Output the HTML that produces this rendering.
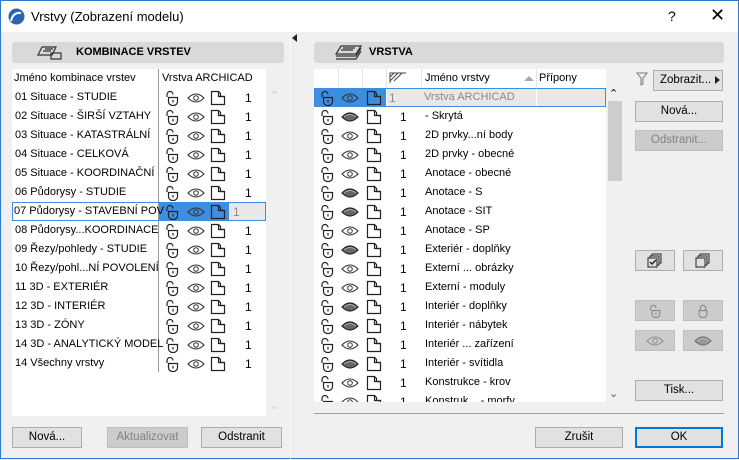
<!DOCTYPE html>
<html><head><meta charset="utf-8"><style>
*{margin:0;padding:0;box-sizing:border-box}
body{width:739px;height:459px;overflow:hidden;font-family:"Liberation Sans","DejaVu Sans",sans-serif;font-size:11px;color:#000;background:#f0f0f0}
.win{position:absolute;left:0;top:0;width:739px;height:459px;border:1px solid #2b79d0;background:#f0f0f0}
.title{position:absolute;left:0;top:0;width:737px;height:31px;background:#fff}
.a{position:absolute;white-space:nowrap}
.hdr{position:absolute;background:#d9d9d9;border-radius:3px;font-weight:bold;font-size:11px}
.list{position:absolute;background:#fff}
.btn{position:absolute;background:#e1e1e1;border:1px solid #adadad;text-align:center;line-height:18px;font-size:11.5px}
.dis{color:#838383;background:#cccccc;border-color:#bfbfbf}
.row{position:absolute;height:19px;line-height:19px}
svg.i{position:absolute}
</style></head><body>
<svg width="0" height="0" style="position:absolute">
<defs>
<symbol id="lk" viewBox="0 0 16 16"><path d="M3 7V4.5a3 3 0 0 1 6 0" fill="none" stroke="#222" stroke-width="1.2"/><path d="M4.5 7.5h9v4a4 4 0 0 1-4 4h-1a4 4 0 0 1-4-4z" fill="none" stroke="#222" stroke-width="1.2"/><path d="M9 10v2.5" stroke="#222" stroke-width="1.2"/></symbol>
<symbol id="ey" viewBox="0 0 18 12"><path d="M1 6Q9-2 17 6Q9 14 1 6z" fill="none" stroke="#333" stroke-width="1.1"/><circle cx="9" cy="6" r="2.3" fill="none" stroke="#333" stroke-width="1"/></symbol>
<symbol id="ec" viewBox="0 0 18 12"><path d="M1 6Q9-2 17 6Q9 14 1 6z" fill="#666" stroke="#222" stroke-width="1.2"/><path d="M3 6Q9 1 15 6" fill="none" stroke="#aaa" stroke-width="1"/></symbol>
<symbol id="dc" viewBox="0 0 16 16"><path d="M1.5 1.5h7l2 2v3h4v8h-13z" fill="none" stroke="#222" stroke-width="1.2"/><path d="M8.5 1.5v5h6" fill="none" stroke="#222" stroke-width="1.2"/></symbol>
<g id="lg"><use href="#lk" x="5" y="2" width="16" height="16"/><use href="#ey" x="28" y="4" width="18" height="12"/><use href="#dc" x="51" y="2" width="16" height="16"/><text x="86" y="14" font-size="12" font-family="Liberation Sans">1</text></g>
<g id="rg"><use href="#lk" x="5" y="2" width="16" height="16"/><use href="#ey" x="27" y="4" width="18" height="12"/><use href="#dc" x="52" y="2" width="16" height="16"/><text x="86" y="14" font-size="12" font-family="Liberation Sans">1</text></g>
<g id="rc"><use href="#lk" x="5" y="2" width="16" height="16"/><use href="#ec" x="27" y="4" width="18" height="12"/><use href="#dc" x="52" y="2" width="16" height="16"/><text x="86" y="14" font-size="12" font-family="Liberation Sans">1</text></g>
</defs></svg>
<div class="win">
<div class="title"></div>
<svg class="i" style="left:7px;top:7px" width="17" height="17" viewBox="0 0 17 17"><circle cx="8.5" cy="8.5" r="8" fill="#2c64b4"/><path d="M3 13Q5 4 13 5" fill="none" stroke="#fff" stroke-width="2"/></svg>
<div class="a" style="left:30px;top:8px;font-size:13px">Vrstvy (Zobrazení modelu)</div>
<div class="a" style="left:667px;top:7px;font-size:14px">?</div>
<div class="a" style="left:709px;top:4px;font-size:18px;font-weight:300">✕</div>

<div class="hdr" style="left:11px;top:41px;width:272px;height:21px"><span class="a" style="left:64px;top:4px">KOMBINACE VRSTEV</span></div>
<svg class="i" style="left:36px;top:45px" width="26" height="14" viewBox="0 0 26 14"><path d="M5 1h14l-4 8H1z M8 3h8 M6 5h8" fill="none" stroke="#333" stroke-width="1.2"/><rect x="14" y="7" width="10" height="6" fill="none" stroke="#333" stroke-width="1.2"/></svg>
<div class="a" style="left:289px;top:32px;width:1px;height:427px;background:#fafafa"></div>
<div class="a" style="left:291px;top:33px;border-right:5px solid #222;border-top:4px solid transparent;border-bottom:4px solid transparent"></div>
<div class="list" style="left:11px;top:68px;width:254px;height:347px"></div>
<div class="a" style="left:265px;top:86px;width:18px;height:329px;background:#f0f0f0"></div>
<div class="a" style="left:269px;top:88px;color:#c8c8c8">⌃</div>
<div class="a" style="left:269px;top:398px;color:#c8c8c8">⌄</div>
<div class="a" style="left:157px;top:68px;width:1px;height:303px;background:#999"></div>
<div class="a" style="left:13px;top:71px">Jméno kombinace vrstev</div>
<div class="a" style="left:161px;top:71px">Vrstva ARCHICAD</div>
<div class="a" style="left:158px;top:201px;width:70px;height:19px;background:#3d8ee0"></div>
<div class="a" style="left:228px;top:201px;width:36px;height:19px;background:#e8e8e8"></div>
<div class="a" style="left:11px;top:201px;width:254px;height:19px;border:1px solid #3d8ee0"></div>
<div class="row" style="left:14px;top:87px">01 Situace - STUDIE</div>
<div class="row" style="left:14px;top:106px">02 Situace - ŠIRŠÍ VZTAHY</div>
<div class="row" style="left:14px;top:125px">03 Situace - KATASTRÁLNÍ</div>
<div class="row" style="left:14px;top:144px">04 Situace - CELKOVÁ</div>
<div class="row" style="left:14px;top:163px">05 Situace - KOORDINAČNÍ</div>
<div class="row" style="left:14px;top:182px">06 Půdorysy - STUDIE</div>
<div class="row" style="left:13px;top:201px">07 Půdorysy - STAVEBNÍ POV</div>
<div class="row" style="left:14px;top:220px">08 Půdorysy...KOORDINACE</div>
<div class="row" style="left:14px;top:239px">09 Řezy/pohledy - STUDIE</div>
<div class="row" style="left:14px;top:258px">10 Řezy/pohl...NÍ POVOLENÍ</div>
<div class="row" style="left:14px;top:277px">11 3D - EXTERIÉR</div>
<div class="row" style="left:14px;top:296px">12 3D - INTERIÉR</div>
<div class="row" style="left:14px;top:315px">13 3D - ZÓNY</div>
<div class="row" style="left:14px;top:334px">14 3D - ANALYTICKÝ MODEL</div>
<div class="row" style="left:14px;top:353px">14 Všechny vrstvy</div>
<svg class="i" style="left:158px;top:87px" width="100" height="285">
<use href="#lg" y="0"/><use href="#lg" y="19"/><use href="#lg" y="38"/><use href="#lg" y="57"/><use href="#lg" y="76"/><use href="#lg" y="95"/>
<use href="#lk" x="5" y="116" width="16" height="16"/><use href="#ey" x="28" y="118" width="18" height="12"/><use href="#dc" x="51" y="116" width="16" height="16"/><text x="74" y="128" font-size="12" fill="#888" font-family="Liberation Sans">1</text>
<use href="#lg" y="133"/><use href="#lg" y="152"/><use href="#lg" y="171"/><use href="#lg" y="190"/><use href="#lg" y="209"/><use href="#lg" y="228"/><use href="#lg" y="247"/><use href="#lg" y="266"/>
</svg>
<div class="btn" style="left:11px;top:426px;width:70px;height:21px">Nová...</div>
<div class="btn dis" style="left:106px;top:426px;width:81px;height:21px">Aktualizovat</div>
<div class="btn" style="left:200px;top:426px;width:81px;height:21px">Odstranit</div>

<div class="hdr" style="left:313px;top:41px;width:410px;height:21px"><span class="a" style="left:55px;top:4px">VRSTVA</span></div>
<svg class="i" style="left:334px;top:44px" width="28" height="16" viewBox="0 0 28 16"><path d="M6 1h20l-5 8H1z M8 3h12 M6 5h12" fill="none" stroke="#333" stroke-width="1.2"/><path d="M1 11h20l5-8 M1 14h20l5-8" fill="none" stroke="#333" stroke-width="1.2"/></svg>
<div class="list" style="left:313px;top:68px;width:292px;height:333px"></div>
<div class="a" style="left:605px;top:87px;width:16px;height:314px;background:#f0f0f0"></div>
<div class="a" style="left:607px;top:100px;width:14px;height:80px;background:#cdcdcd"></div>
<div class="a" style="left:608px;top:86px;font-size:11px">⌃</div>
<div class="a" style="left:608px;top:386px;font-size:11px;color:#555">⌄</div>
<div class="a" style="left:337px;top:68px;width:1px;height:19px;background:#e5e5e5"></div>
<div class="a" style="left:361px;top:68px;width:1px;height:19px;background:#e5e5e5"></div>
<div class="a" style="left:385px;top:68px;width:1px;height:19px;background:#e5e5e5"></div>
<div class="a" style="left:420px;top:68px;width:1px;height:19px;background:#e5e5e5"></div>
<div class="a" style="left:535px;top:68px;width:1px;height:19px;background:#e5e5e5"></div>
<svg class="i" style="left:388px;top:71px" width="18" height="12" viewBox="0 0 18 12"><path d="M1 11V1h16 M1 5l4-4 M1 9l8-8 M5 9l8-8" fill="none" stroke="#444" stroke-width="1"/></svg>
<div class="a" style="left:424px;top:71px">Jméno vrstvy</div>
<div class="a" style="left:523px;top:75px;border-bottom:5px solid #aaa;border-left:5px solid transparent;border-right:5px solid transparent"></div>
<div class="a" style="left:538px;top:71px">Přípony</div>
<div class="a" style="left:313px;top:87px;width:72px;height:19px;background:#3d8ee0"></div>
<div class="a" style="left:386px;top:88px;width:149px;height:17px;background:#e8e8e8"></div>
<div class="a" style="left:536px;top:88px;width:68px;height:17px;background:#e8e8e8"></div>
<div class="a" style="left:313px;top:87px;width:292px;height:19px;border:1px solid #3d8ee0"></div>
<div class="a" style="left:388px;top:90px;color:#888;font-size:12px">1</div>
<div class="a" style="left:423px;top:90px;color:#888">Vrstva ARCHICAD</div>
<div style="position:absolute;left:424px;top:106px;width:180px;height:295px;overflow:hidden">
<div class="row" style="top:0">- Skrytá</div>
<div class="row" style="top:19px">2D prvky...ní body</div>
<div class="row" style="top:38px">2D prvky - obecné</div>
<div class="row" style="top:57px">Anotace - obecné</div>
<div class="row" style="top:76px">Anotace - S</div>
<div class="row" style="top:95px">Anotace - SIT</div>
<div class="row" style="top:114px">Anotace - SP</div>
<div class="row" style="top:133px">Exteriér - doplňky</div>
<div class="row" style="top:152px">Externí ... obrázky</div>
<div class="row" style="top:171px">Externí - moduly</div>
<div class="row" style="top:190px">Interiér - doplňky</div>
<div class="row" style="top:209px">Interiér - nábytek</div>
<div class="row" style="top:228px">Interiér ... zařízení</div>
<div class="row" style="top:247px">Interiér - svítidla</div>
<div class="row" style="top:266px">Konstrukce - krov</div>
<div class="row" style="top:285px">Konstruk... - morfy</div>
</div>
<svg class="i" style="left:313px;top:87px" width="100" height="314">
<use href="#lk" x="5" y="2" width="16" height="16"/><use href="#ey" x="27" y="4" width="18" height="12"/><use href="#dc" x="52" y="2" width="16" height="16"/>
<use href="#rc" y="19"/><use href="#rg" y="38"/><use href="#rg" y="57"/><use href="#rg" y="76"/><use href="#rc" y="95"/><use href="#rc" y="114"/><use href="#rg" y="133"/><use href="#rc" y="152"/><use href="#rg" y="171"/><use href="#rg" y="190"/><use href="#rc" y="209"/><use href="#rc" y="228"/><use href="#rg" y="247"/><use href="#rc" y="266"/><use href="#rg" y="285"/><use href="#rg" y="304"/>
</svg>
<div class="a" style="left:313px;top:412px;width:410px;height:1px;background:#a0a0a0"></div>

<svg class="i" style="left:635px;top:71px" width="12" height="14" viewBox="0 0 12 14"><path d="M1 1h10L7 6v6l-2 1V6z" fill="none" stroke="#777"/></svg>
<div class="btn" style="left:652px;top:69px;width:70px;height:21px;text-align:left;padding-left:6px">Zobrazit...<span class="a" style="left:61px;top:5px;border-left:5px solid #222;border-top:4px solid transparent;border-bottom:4px solid transparent"></span></div>
<div class="btn" style="left:634px;top:100px;width:88px;height:21px">Nová...</div>
<div class="btn dis" style="left:634px;top:129px;width:88px;height:21px">Odstranit...</div>
<div class="btn" style="left:634px;top:249px;width:40px;height:21px"><svg width="16" height="16" style="margin-top:2px" viewBox="0 0 16 16"><path d="M5 3V1h9v9h-2 M3 5V3h9v9h-2" fill="none" stroke="#222"/><rect x="1" y="5" width="9" height="9" fill="none" stroke="#222"/><path d="M3 9l2 2 4-4" fill="none" stroke="#222" stroke-width="1.5"/></svg></div>
<div class="btn" style="left:682px;top:249px;width:40px;height:21px"><svg width="16" height="16" style="margin-top:2px" viewBox="0 0 16 16"><path d="M5 3V1h9v9h-2 M3 5V3h9v9h-2" fill="none" stroke="#222"/><rect x="1" y="5" width="9" height="9" fill="none" stroke="#222"/></svg></div>
<div class="btn dis" style="left:634px;top:299px;width:40px;height:21px"><svg width="14" height="14" style="margin-top:3px;opacity:.4"><use href="#lk"/></svg></div>
<div class="btn dis" style="left:682px;top:299px;width:40px;height:21px"><svg width="14" height="14" viewBox="0 0 16 16" style="margin-top:3px;opacity:.4"><path d="M5 7V4.5a3 3 0 0 1 6 0V7" fill="none" stroke="#222" stroke-width="1.2"/><path d="M3.5 7.5h9v4a4 4 0 0 1-4 4h-1a4 4 0 0 1-4-4z" fill="none" stroke="#222" stroke-width="1.2"/></svg></div>
<div class="btn dis" style="left:634px;top:329px;width:40px;height:21px"><svg width="18" height="12" style="margin-top:4px;opacity:.4"><use href="#ey"/></svg></div>
<div class="btn dis" style="left:682px;top:329px;width:40px;height:21px"><svg width="18" height="12" style="margin-top:4px;opacity:.5"><use href="#ec"/></svg></div>
<div class="btn" style="left:634px;top:379px;width:88px;height:21px">Tisk...</div>
<div class="btn" style="left:534px;top:426px;width:88px;height:21px">Zrušit</div>
<div class="btn" style="left:634px;top:426px;width:88px;height:21px;border:2px solid #0078d7;line-height:17px">OK</div>
</div>
</body></html>
